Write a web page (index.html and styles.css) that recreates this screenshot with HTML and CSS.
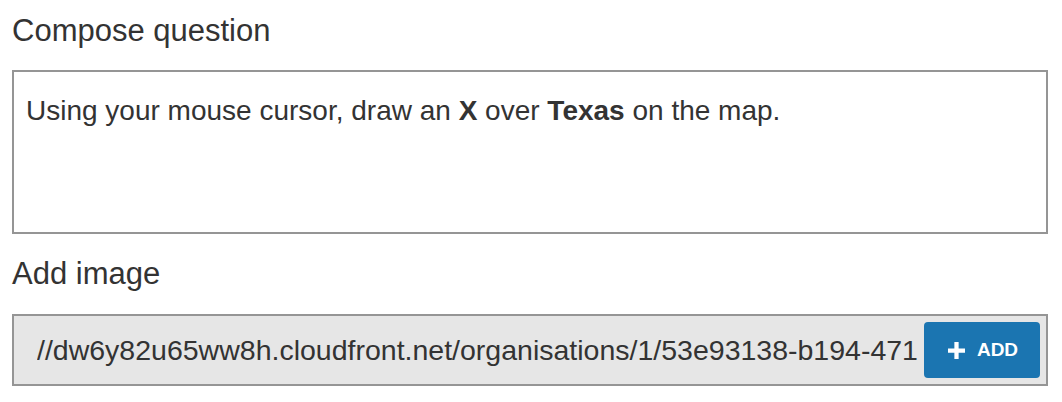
FILE: index.html
```html
<!DOCTYPE html>
<html>
<head>
<meta charset="utf-8">
<link rel="stylesheet" href="styles.css">
</head>
<body>
<div class="form">
  <label class="label label-first">Compose question</label>
  <div class="editor">
    <p class="editor-text">Using your mouse cursor, draw an <b>X</b> over <b>Texas</b> on the map.</p>
  </div>
  <label class="label label-second">Add image</label>
  <div class="url-field">
    <span class="url-text">//dw6y82u65ww8h.cloudfront.net/organisations/1/53e93138-b194-471</span>
    <button class="add-btn" type="button">
      <svg class="plus" viewBox="0 0 16 16" width="17" height="17"><path d="M6 0h4v6h6v4h-6v6H6v-6H0V6h6z" fill="#fff"/></svg>
      <span>ADD</span>
    </button>
  </div>
</div>
</body>
</html>
```
FILE: styles.css
```css
html, body {
  margin: 0;
  padding: 0;
  background: #fff;
}
body {
  font-family: "Liberation Sans", Arial, Helvetica, sans-serif;
  color: #333;
}
.form {
  display: flex;
  flex-direction: column;
  width: 1036px;
  padding: 0 0 0 12px;
}
.label {
  display: block;
  font-size: 31px;
  line-height: 34px;
  height: 34px;
}
.label-first {
  margin-top: 14px;
}
.label-second {
  margin-top: 23px;
}
.editor {
  margin-top: 22px;
  height: 160px;
  border: 2px solid #959595;
  background: #fff;
  padding: 0 12px;
}
.editor-text {
  margin: 0;
  padding-top: 19px;
  font-size: 28px;
  line-height: 40px;
}
.editor-text b {
  font-weight: bold;
}
.url-field {
  margin-top: 23px;
  height: 68px;
  border: 2px solid #959595;
  background: #e6e6e6;
  display: flex;
  align-items: center;
  padding: 0 6px 0 23px;
}
.url-text {
  flex: 1;
  min-width: 0;
  overflow: hidden;
  white-space: nowrap;
  font-size: 28.5px;
  color: #333;
}
.add-btn {
  flex: none;
  width: 116px;
  height: 56px;
  border: 0;
  border-radius: 4px;
  background: #1b75b1;
  color: #fff;
  display: flex;
  align-items: center;
  justify-content: center;
  gap: 12px;
  font-family: "Liberation Sans", Arial, sans-serif;
  font-size: 19px;
  font-weight: bold;
  padding: 0 0 0 2px;
}
.plus {
  display: block;
}
```
